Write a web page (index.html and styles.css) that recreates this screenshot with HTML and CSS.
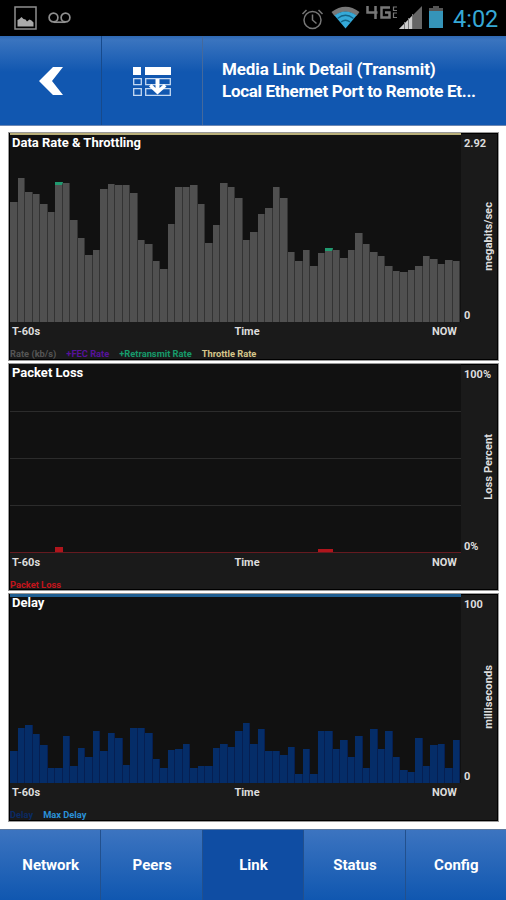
FILE: index.html
```
<!DOCTYPE html>
<html lang="en">
<head>
    <meta charset="UTF-8">
    <meta name="viewport" content="width=device-width, initial-scale=1.0">
    <title>Media Link Detail</title>
    <link rel="stylesheet" href="styles.css">
</head>

<body>
    <div class="statusbar">
        <svg class="icon-picture" width="23" height="24" viewBox="0 0 23 24">
            <rect x="1" y="1" width="21" height="22" fill="none" stroke="#8f8f8f" stroke-width="1.5"/>
            <path d="M3.500 20.500V14l2-1 2-2 2 2 2 .5 1.500 2 2.500-2 2 1 2 2v4z" fill="#aaa"/>
        </svg>
        <svg class="icon-voicemail" width="23" height="12" viewBox="0 0 23 12">
            <g fill="none" stroke="#8f8f8f" stroke-width="1.700">
                <circle cx="5.500" cy="5.500" r="4.400"/>
                <circle cx="17.500" cy="5.500" r="4.400"/>
                <path d="M5.500 10.200h12"/>
            </g>
        </svg>
        <span class="spacer"></span>
        <svg class="icon-alarm" width="23" height="22" viewBox="0 0 23 22">
            <g fill="none" stroke="#777" stroke-width="1.500">
                <circle cx="11.500" cy="12" r="8.500"/>
                <path d="M11.500 6.500V12l4 3.500M1.500 6l4-4M21.500 6l-4-4"/>
            </g>
        </svg>
        <svg class="icon-wifi" width="29" height="23" viewBox="0 0 29 23">
            <path d="M.5 6Q14.500-4.500 28.500 6l-3 4Q14.500 1.500 3.500 10z" fill="#777"/>
            <path d="M3.500 9.500Q14.500 1.500 25.500 9.500L14.500 22.500z" fill="#35a9d8"/>
            <path d="M6.500 12.500Q14.500 6 22.500 12.500M10 16Q14.500 12.500 19 16" fill="none" stroke="#136487" stroke-width="1.300"/>
        </svg>
        <svg class="icon-4g" width="32" height="14" viewBox="0 0 32 14">
            <path d="M1.500 0v6.500h10M9.500 0v13M24 1.500H15.500v10H23.500V6.500H19" fill="none" stroke="#777" stroke-width="2.500"/>
            <path d="M31 1h-3.500v3.500H31M31 7h-3.500v4.500H31" fill="none" stroke="#777" stroke-width="1.200"/>
        </svg>
        <svg class="icon-signal" width="23" height="23" viewBox="0 0 23 23">
            <path d="M23 0v23H0z" fill="#666"/>
            <path d="M13 10v13H0z" fill="#ccc"/>
            <path d="M5.500 16v7M9.500 12v11M13.500 8v15" stroke="#777" stroke-width="1"/>
        </svg>
        <svg class="icon-battery" width="14" height="22" viewBox="0 0 14 22">
            <path d="M4 0h6v2h4v4H0V2h4z" fill="#555"/>
            <path d="M0 5h14v17H0z" fill="#3594b9"/>
        </svg>
        <span class="clock">4:02</span>
    </div>

    <div class="header">
        <div class="header-btn">
            <svg class="icon-back" width="24" height="28" viewBox="0 0 24 28"><path d="M14 0h10L13 14l11 14H14L0 14z" fill="#fff"/></svg>
        </div>
        <div class="header-btn">
            <svg class="icon-table" width="38" height="30" viewBox="0 0 38 30">
                <path d="M0 0h8v8H0zM12 0h26v8H12z" fill="#fff"/>
                <path d="M.7 11.700h7.600v6H.7zM.7 21.700h7.600v6.600H.7zM12.700 11.700h24.600v6H12.700zM12.700 21.700h24.600v6.600H12.700z" fill="none" stroke="#c5d9f2" stroke-width="1.300"/>
                <path d="M22.500 12h4v9l4.500-4 2.500 2.500-9 8-8.500-8 2.500-2.500 4 4z" fill="#fff"/>
            </svg>
        </div>
        <div class="header-title">
            <div>Media Link Detail (Transmit)</div>
            <div class="subtitle">Local Ethernet Port to Remote Et...</div>
        </div>
    </div>

    <div class="charts">
        <div class="panel rate">
            <div class="main">
                <div class="plot" id="ratePlot"><span class="title">Data Rate &amp; Throttling</span></div>
                <div class="times"><span>T-60s</span><span>Time</span><span>NOW</span></div>
                <div class="legend">
                    <span class="c-rate">Rate (kb/s)</span>
                    <span class="c-fec">+FEC Rate</span>
                    <span class="c-retransmit">+Retransmit Rate</span>
                    <span class="c-throttle">Throttle Rate</span>
                </div>
            </div>
            <div class="axis"><span>2.92</span><span class="unit">megabits/sec</span><span>0</span></div>
        </div>

        <div class="panel loss">
            <div class="main">
                <div class="plot" id="lossPlot"><span class="title">Packet Loss</span></div>
                <div class="times"><span>T-60s</span><span>Time</span><span>NOW</span></div>
                <div class="legend"><span class="c-loss">Packet Loss</span></div>
            </div>
            <div class="axis"><span>100%</span><span class="unit">Loss Percent</span><span>0%</span></div>
        </div>

        <div class="panel delay">
            <div class="main">
                <div class="plot" id="delayPlot"><span class="title">Delay</span></div>
                <div class="times"><span>T-60s</span><span>Time</span><span>NOW</span></div>
                <div class="legend">
                    <span class="c-delay">Delay</span>
                    <span class="c-max">Max Delay</span>
                </div>
            </div>
            <div class="axis"><span>100</span><span class="unit">milliseconds</span><span>0</span></div>
        </div>
    </div>

    <div class="tabs">
        <div class="tab">Network</div>
        <div class="tab">Peers</div>
        <div class="tab active">Link</div>
        <div class="tab">Status</div>
        <div class="tab">Config</div>
    </div>

    <script src="script.js"></script>
</body>
</html>
```
FILE: styles.css
```
* {
    box-sizing: border-box;
}

body {
    margin: 0;
    width: 506px;
    height: 900px;
    display: flex;
    flex-direction: column;
    background: #fff;
    color: #fff;
    font-family: Roboto, sans-serif;
    overflow: hidden;
}

.statusbar {
    height: 36px;
    flex: none;
    display: flex;
    align-items: flex-start;
    padding: 6px 10px 0 14px;
    background: #000;
}

.icon-voicemail {
    margin: 6px 0 0 11px;
}

.spacer {
    flex: 1;
}

.icon-alarm {
    margin-top: 2px;
}

.icon-wifi {
    margin-left: 7px;
}

.icon-4g {
    margin-left: 6px;
}

.icon-signal {
    margin-left: 1px;
}

.icon-battery {
    margin-left: 7px;
}

.clock {
    width: 43px;
    margin-left: 10px;
    color: #36a9d6;
    font-size: 23.500px;
    line-height: 27px;
    white-space: nowrap;
}

.header {
    height: 90px;
    flex: none;
    display: flex;
    background: linear-gradient(#2e68b2 0, #3a74bf 4px, #1157b0 36px, #1157b0 100%);
    border-bottom: 1px solid #6d88b4;
}

.header-btn {
    width: 102px;
    display: flex;
    justify-content: center;
    padding-top: 31px;
    border-right: 1px solid #174a8c;
}

.header-btn + .header-btn {
    width: 101px;
    border-right-color: #44699c;
}

.header-title {
    padding: 23px 0 0 19px;
    font-size: 17px;
    font-weight: 700;
    line-height: 21.5px;
    letter-spacing: -0.1px;
    white-space: nowrap;
}

.header-title .subtitle {
    letter-spacing: -0.31px;
}

.charts {
    height: 703px;
    flex: none;
    display: flex;
    flex-direction: column;
    gap: 2px;
    padding: 6px 7px 7px 8px;
}

.panel {
    height: 228.500px;
    flex: none;
    display: flex;
    background: #1a1a1a;
    border: 1px solid #999;
    box-shadow: inset 0 0 0 1px #000;
    padding: 0 1px 1px;
}

.main {
    width: 451px;
    display: flex;
    flex-direction: column;
}

.plot {
    position: relative;
    height: 189px;
    flex: none;
    display: flex;
    align-items: flex-end;
    background: #111;
}

.rate .plot {
    border-top: 2px solid #b8ae78;
}

.delay .plot {
    border-top: 3px solid #205f92;
}

.loss .plot {
    background: repeating-linear-gradient(#111 0, #111 46px, #2c2c2c 46px, #2c2c2c 47px) 0 1px no-repeat #111;
    border-bottom: 1px solid #651a20;
}

/* titles sit over the bars */
.title {
    position: absolute;
    left: 2px;
    top: 0;
    font-size: 13px;
    font-weight: 700;
    line-height: 16px;
}

.loss .title {
    top: 1px;
}

.delay .title {
    top: -2px;
}

.bar {
    width: 7.5px;
    flex: none;
    border-right: 1px solid #333;
    background: #505050;
}

.bar.retransmit {
    border-top: 3px solid #209a70;
}

.loss .bar {
    background: #b0151c;
    border: 0;
}

.delay .bar {
    background: #052d68;
    border-right-color: #061f52;
}

.times {
    display: grid;
    grid-template-columns: 1fr 1fr 1fr;
    padding: 1px 4px 0 2px;
    font-size: 11px;
    font-weight: 700;
    line-height: 17px;
    color: #ddd;
}

.times span:nth-child(2) {
    padding-left: 25px;
    text-align: center;
}

.times span:last-child {
    text-align: right;
}

.legend {
    display: flex;
    gap: 10px;
    margin-top: 7px;
    font-size: 9.3px;
    font-weight: 700;
    line-height: 13px;
    white-space: nowrap;
}

.c-rate { color: #555; }
.c-fec { color: #57129a; }
.c-retransmit { color: #169b6b; }
.c-throttle { color: #d6c78b; }
.c-loss { color: #c5141a; }
.c-delay { color: #0a2a63; }
.c-max { color: #2a91d8; }

.axis {
    flex: 1;
    height: 189px;
    display: flex;
    flex-direction: column;
    justify-content: space-between;
    padding: 4px 0 0 3px;
    font-size: 11px;
    font-weight: 700;
    line-height: 13px;
    color: #ddd;
}

.unit {
    writing-mode: vertical-rl;
    transform: rotate(180deg);
    align-self: flex-end;
    margin: 13px 2px 0 0;
    font-size: 11.200px;
}

.tabs {
    flex: 1;
    display: flex;
    background: linear-gradient(#3c74c0, #1057b0);
    border-top: 1px solid #5b789f;
}

.tab {
    flex: 1;
    display: flex;
    align-items: center;
    justify-content: center;
    padding: 0 0 0 1px;
    border-right: 1px solid #22508d;
    font-size: 15px;
    font-weight: 700;
}

.tab:last-child {
    border-right: 0;
}

.tab.active {
    background: #0f4da3;
}
```
FILE: script.js
```
// one value per second, oldest first, in pixels
const rate = [120, 144, 130, 128, 118, 110, 140, 139, 102, 84, 67, 72, 133, 138, 137, 137, 129, 82, 78, 61,
    53, 98, 135, 135, 137, 118, 79, 97, 139, 135, 124, 82, 90, 108, 114, 135, 124, 70, 61, 72,
    56, 69, 74, 72, 64, 72, 89, 78, 70, 66, 56, 51, 50, 52, 56, 66, 63, 58, 62, 61];
const delay = [32, 55, 58, 49, 38, 15, 15, 47, 17, 35, 26, 52, 32, 50, 45, 18, 55, 55, 50, 24,
    15, 33, 34, 39, 15, 17, 17, 35, 39, 36, 52, 60, 39, 54, 32, 32, 28, 36, 9, 34,
    9, 52, 52, 34, 43, 26, 47, 15, 54, 34, 52, 26, 13, 11, 45, 17, 38, 39, 15, 43];
const loss = new Array(60).fill(0);
loss[6] = 5;
loss[41] = 3;
loss[42] = 3;

function drawBars(id, values, marked) {
    const plot = document.getElementById(id);
    values.forEach((value, i) => {
        const bar = document.createElement('div');
        bar.className = marked.includes(i) ? 'bar retransmit' : 'bar';
        bar.style.height = value + 'px';
        plot.appendChild(bar);
    });
}

drawBars('ratePlot', rate, [6, 42]);
drawBars('lossPlot', loss, []);
drawBars('delayPlot', delay, []);
```
